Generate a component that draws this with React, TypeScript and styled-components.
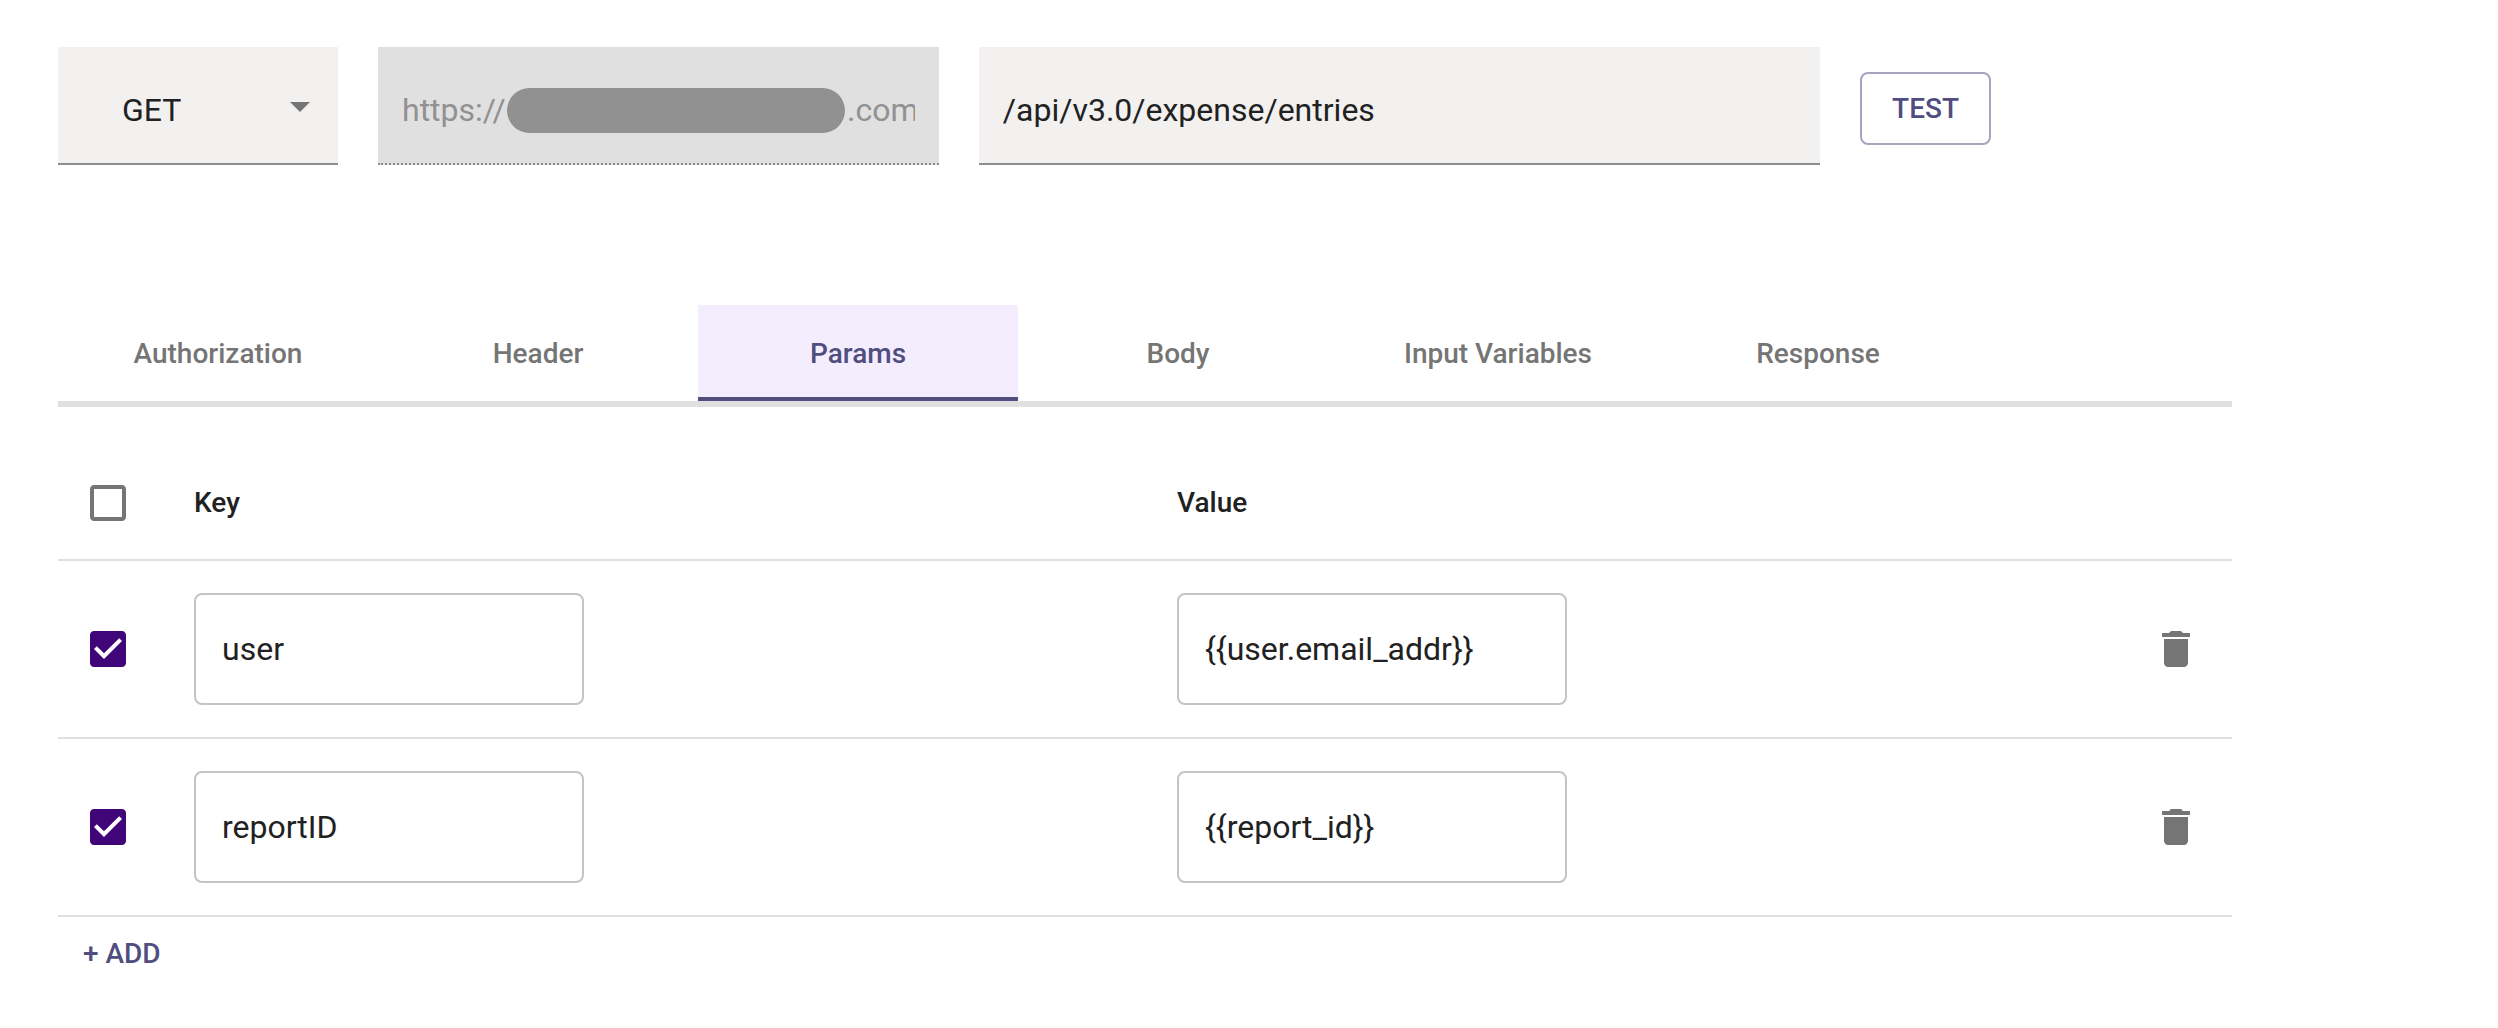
import { useState } from "react";
import styled, { createGlobalStyle, css } from "styled-components";

const color = {
  text: "#212121",
  muted: "#757575",
  disabled: "#919191",
  primary: "#504d7f",
  primaryBorder: "#a7a4bf",
  primaryTint: "#f3edfd",
  accent: "#3f0579",
  line: "#e0e0e0",
  outline: "#c4c4c4",
  underline: "#8d8d8d",
  field: "#f3f1f0",
};

const GlobalStyle = createGlobalStyle`
  *, *::before, *::after { box-sizing: border-box; }
  body { margin: 0; background: #fff; }
  body, button, input, select { font-family: Roboto, "Liberation Sans", sans-serif; }
`;

const Page = styled.main`
  padding: 47px 266px 56px 58px;
  color: ${color.text};
`;

const RequestBar = styled.form`
  display: grid;
  grid-template-columns: 280px 2fr 3fr auto;
  align-items: end;
  gap: 40px;
  padding-right: 241px;
`;

const Field = styled.div`
  position: relative;
`;

const filled = css`
  display: block;
  width: 100%;
  margin: 0;
  border: 0;
  border-bottom: 2px solid ${color.underline};
  border-radius: 0;
  outline: 0;
  background: ${color.field};
  color: ${color.text};
  font-size: 32px;
  line-height: 38px;
`;

const FilledInput = styled.input`
  ${filled}
  height: 118px;
  padding: 44px 24px 34px;

  &:disabled {
    border-bottom-style: dotted;
    background: ${color.line};
    color: ${color.disabled};
  }
`;

const MethodSelect = styled.select`
  ${filled}
  height: 118px;
  padding: 44px 64px 34px;
  appearance: none;
`;

const SelectArrow = styled.svg`
  position: absolute;
  top: 35px;
  right: 14px;
  width: 48px;
  height: 48px;
  fill: ${color.muted};
  pointer-events: none;
`;

const Redaction = styled.span`
  position: absolute;
  top: 41px;
  right: 94px;
  left: 129px;
  height: 45px;
  border-radius: 23px;
  background: ${color.disabled};
`;

const TextButton = styled.button`
  border: 0;
  background: none;
  color: ${color.primary};
  font-size: 28px;
  font-weight: 500;
  line-height: 49px;
  cursor: pointer;
`;

const OutlinedButton = styled(TextButton)`
  margin-bottom: 20px;
  padding: 10px 30px;
  border: 2px solid ${color.primaryBorder};
  border-radius: 8px;
`;

const AddButton = styled(TextButton)`
  margin: 12px 8px;
  padding: 0 17px;
`;

const TabList = styled.div`
  display: flex;
  margin-top: 140px;
  border-bottom: 6px solid ${color.line};
`;

const Tab = styled.button<{ $active: boolean }>`
  flex: 0 1 320px;
  height: 96px;
  padding: 0 24px;
  border: 0;
  background: ${(p) => (p.$active ? color.primaryTint : "none")};
  box-shadow: ${(p) => (p.$active ? `inset 0 -4px ${color.primary}` : "none")};
  color: ${(p) => (p.$active ? color.primary : color.muted)};
  font-size: 28px;
  font-weight: 500;
  cursor: pointer;
`;

const Table = styled.table`
  width: 100%;
  margin-top: 40px;
  border-collapse: separate;
  border-spacing: 0;
  table-layout: fixed;
`;

const Head = styled.th<{ $narrow?: boolean }>`
  width: ${(p) => (p.$narrow ? "104px" : "auto")};
  height: 114px;
  padding: ${(p) => (p.$narrow ? "0 24px 0 26px" : "0 32px")};
  border-bottom: 2px solid ${color.line};
  font-size: 28px;
  font-weight: 500;
  line-height: 32px;
  text-align: left;
`;

const Cell = styled.td<{ $pad: string }>`
  padding: ${(p) => p.$pad};
  border-bottom: 2px solid ${color.line};
`;

const OutlinedInput = styled.input`
  display: block;
  width: 390px;
  max-width: 100%;
  height: 112px;
  padding: 0 26px;
  border: 2px solid ${color.outline};
  border-radius: 8px;
  outline: 0;
  background: none;
  color: ${color.text};
  font-size: 32px;
`;

const CheckLabel = styled.label`
  position: relative;
  display: block;
  width: 48px;
  height: 48px;
  cursor: pointer;
`;

const CheckInput = styled.input`
  position: absolute;
  inset: 0;
  width: 100%;
  height: 100%;
  margin: 0;
  opacity: 0;
  cursor: pointer;
`;

const Icon = styled.svg<{ $tone: string }>`
  display: block;
  width: 48px;
  height: 48px;
  fill: ${(p) => p.$tone};
`;

const IconButton = styled.button`
  display: block;
  padding: 0;
  border: 0;
  background: none;
  cursor: pointer;
`;

const CHECKED =
  "M19 3H5c-1.11 0-2 .9-2 2v14c0 1.1.89 2 2 2h14c1.11 0 2-.9 2-2V5c0-1.1-.89-2-2-2zm-9 14l-5-5 1.41-1.41L10 14.17l7.59-7.59L19 8l-9 9z";
const UNCHECKED =
  "M19 5v14H5V5h14m0-2H5c-1.1 0-2 .9-2 2v14c0 1.1.9 2 2 2h14c1.1 0 2-.9 2-2V5c0-1.1-.9-2-2-2z";
const TRASH = "M6 19c0 1.1.9 2 2 2h8c1.1 0 2-.9 2-2V7H6v12zM19 4h-3.5l-1-1h-5l-1 1H5v2h14V4z";

function Checkbox(props: { label: string; checked: boolean; onChange: (v: boolean) => void }) {
  return (
    <CheckLabel>
      <Icon $tone={props.checked ? color.accent : color.muted} viewBox="0 0 24 24" aria-hidden="true">
        <path d={props.checked ? CHECKED : UNCHECKED} />
      </Icon>
      <CheckInput
        type="checkbox"
        aria-label={props.label}
        checked={props.checked}
        onChange={(e) => props.onChange(e.target.checked)}
      />
    </CheckLabel>
  );
}

const TABS = ["Authorization", "Header", "Params", "Body", "Input Variables", "Response"];
const HOST = "https://" + "\u00a0".repeat(43) + ".com";

type Param = { id: number; on: boolean; key: string; value: string };

export default function App() {
  const [tab, setTab] = useState("Params");
  const [all, setAll] = useState(false);
  const [params, setParams] = useState<Param[]>([
    { id: 1, on: true, key: "user", value: "{{user.email_addr}}" },
    { id: 2, on: true, key: "reportID", value: "{{report_id}}" },
  ]);

  const update = (id: number, patch: Partial<Param>) =>
    setParams((list) => list.map((p) => (p.id === id ? { ...p, ...patch } : p)));

  return (
    <>
      <GlobalStyle />
      <Page>
        <RequestBar onSubmit={(e) => e.preventDefault()}>
          <Field>
            <MethodSelect aria-label="Method" defaultValue="GET">
              <option>GET</option>
              <option>POST</option>
              <option>PUT</option>
              <option>DELETE</option>
            </MethodSelect>
            <SelectArrow viewBox="0 0 24 24" aria-hidden="true">
              <path d="M7 10l5 5 5-5z" />
            </SelectArrow>
          </Field>
          <Field>
            <FilledInput aria-label="Host" disabled defaultValue={HOST} />
            <Redaction />
          </Field>
          <Field>
            <FilledInput aria-label="Path" defaultValue="/api/v3.0/expense/entries" />
          </Field>
          <OutlinedButton type="submit">TEST</OutlinedButton>
        </RequestBar>

        <TabList role="tablist">
          {TABS.map((name) => (
            <Tab
              key={name}
              type="button"
              role="tab"
              aria-selected={name === tab}
              $active={name === tab}
              onClick={() => setTab(name)}
            >
              {name}
            </Tab>
          ))}
        </TabList>

        <Table>
          <thead>
            <tr>
              <Head $narrow>
                <Checkbox
                  label="Select all"
                  checked={all}
                  onChange={(on) => {
                    setAll(on);
                    setParams((list) => list.map((p) => ({ ...p, on })));
                  }}
                />
              </Head>
              <Head>Key</Head>
              <Head>Value</Head>
              <Head $narrow />
            </tr>
          </thead>
          <tbody>
            {params.map((p) => (
              <tr key={p.id}>
                <Cell $pad="0 24px 0 26px">
                  <Checkbox label={`Use ${p.key}`} checked={p.on} onChange={(on) => update(p.id, { on })} />
                </Cell>
                <Cell $pad="32px">
                  <OutlinedInput
                    aria-label="Key"
                    value={p.key}
                    onChange={(e) => update(p.id, { key: e.target.value })}
                  />
                </Cell>
                <Cell $pad="32px">
                  <OutlinedInput
                    aria-label="Value"
                    value={p.value}
                    onChange={(e) => update(p.id, { value: e.target.value })}
                  />
                </Cell>
                <Cell $pad="0 24px">
                  <IconButton
                    type="button"
                    aria-label={`Delete ${p.key}`}
                    onClick={() => setParams((list) => list.filter((q) => q.id !== p.id))}
                  >
                    <Icon $tone={color.muted} viewBox="0 0 24 24" aria-hidden="true">
                      <path d={TRASH} />
                    </Icon>
                  </IconButton>
                </Cell>
              </tr>
            ))}
          </tbody>
        </Table>
        <AddButton
          type="button"
          onClick={() =>
            setParams((list) => [...list, { id: Date.now(), on: true, key: "", value: "" }])
          }
        >
          + ADD
        </AddButton>
      </Page>
    </>
  );
}
